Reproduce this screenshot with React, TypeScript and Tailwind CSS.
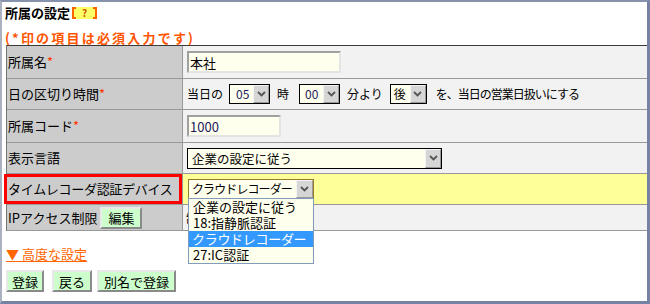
import React from "react";

function Chevron() {
  return (
    <svg width="9" height="6" viewBox="0 0 9 6" className="block">
      <path d="M1 1 L4.5 4.5 L8 1" fill="none" stroke="#555" strokeWidth="1.8" />
    </svg>
  );
}

function ArrowBox({ className }: { className: string }) {
  return (
    <div className={className}>
      <Chevron />
    </div>
  );
}

export default function App() {
  return (
    <div className="w-[650px] h-[304px] box-border bg-white border-t-2 border-l-2 border-r-[3px] border-b-[3px] border-t-[#8792ad] border-l-[#aab1c0] border-r-[#7582a3] border-b-[#7582a3] font-['Noto_Sans_CJK_JP',sans-serif] text-black overflow-hidden">
      {/* title */}
      <div className="h-[21px] flex items-center pl-[3px]">
        <span className="text-[13px] font-bold leading-none">所属の設定</span>
        <span className="ml-[2px] w-[25px] h-[12px] bg-[#ffff66] flex items-stretch justify-between">
          <span className="w-[4px] border-l-2 border-y-2 border-[#ff6600]" />
          <span className="text-[10px] font-bold leading-[12px] text-[#cc5500]">?</span>
          <span className="w-[4px] border-r-2 border-y-2 border-[#ff6600]" />
        </span>
      </div>
      {/* note */}
      <div className="h-[22px] pt-[6px] flex items-center pl-[3px]">
        <span className="text-[13px] font-bold leading-none text-[#ff5500] tracking-[2.2px]">(*印の項目は必須入力です)</span>
      </div>

      {/* table */}
      <div className="ml-[4px] border-t border-t-[#3a3a3a] border-l border-l-[#777]">
        {/* row 1 */}
        <div className="flex h-[33px] border-b border-[#999]">
          <div className="w-[176px] shrink-0 bg-[#cccccc] border-r border-[#999] flex items-center pl-[1px] text-[13px]">
            所属名<span className="text-[#ff3300]">*</span>
          </div>
          <div className="flex-1 bg-[#f2f2f2] flex items-center pl-[4px]">
            <div className="w-[154px] h-[22px] bg-[#ffffee] border-2 border-t-[#a0a0a0] border-l-[#a0a0a0] border-r-[#e4e4e4] border-b-[#e4e4e4] flex items-center pl-[1px] text-[13px] leading-none">
              本社
            </div>
          </div>
        </div>
        {/* row 2 */}
        <div className="flex h-[31px] border-b border-[#999]">
          <div className="w-[176px] shrink-0 bg-[#cccccc] border-r border-[#999] flex items-center pl-[1px] text-[13px]">
            日の区切り時間<span className="text-[#ff3300]">*</span>
          </div>
          <div className="flex-1 bg-[#f2f2f2] flex items-center pl-[4px] text-[12px]">
            <span>当日の</span>
            <div className="ml-[6px] w-[41px] h-[20px] bg-[#ffffee] border border-black flex items-stretch">
              <span className="flex-1 pl-[6px] text-[12px] leading-[18px] text-[#1a1a5e]">05</span>
              <ArrowBox className="w-[16px] bg-[#d6d6d6] border border-t-[#f4f4f4] border-l-[#f4f4f4] border-r-[#999] border-b-[#999] flex items-center justify-center" />
            </div>
            <span className="ml-[7px]">時</span>
            <div className="ml-[10px] w-[41px] h-[20px] bg-[#ffffee] border border-black flex items-stretch">
              <span className="flex-1 pl-[5px] text-[12px] leading-[18px] text-[#1a1a5e]">00</span>
              <ArrowBox className="w-[16px] bg-[#d6d6d6] border border-t-[#f4f4f4] border-l-[#f4f4f4] border-r-[#999] border-b-[#999] flex items-center justify-center" />
            </div>
            <span className="ml-[7px]">分より</span>
            <div className="ml-[7px] w-[37px] h-[20px] bg-[#ffffee] border border-black flex items-stretch">
              <span className="flex-1 pl-[3px] text-[12px] leading-[18px]">後</span>
              <ArrowBox className="w-[16px] bg-[#d6d6d6] border border-t-[#f4f4f4] border-l-[#f4f4f4] border-r-[#999] border-b-[#999] flex items-center justify-center" />
            </div>
            <span className="ml-[9px] tracking-[-1px]">を、当日の営業日扱いにする</span>
          </div>
        </div>
        {/* row 3 */}
        <div className="flex h-[33px] border-b border-[#999]">
          <div className="w-[176px] shrink-0 bg-[#cccccc] border-r border-[#999] flex items-center pl-[1px] text-[13px]">
            所属コード<span className="text-[#ff3300]">*</span>
          </div>
          <div className="flex-1 bg-[#f2f2f2] flex items-center pl-[4px]">
            <div className="w-[94px] h-[22px] bg-[#ffffee] border-2 border-t-[#a0a0a0] border-l-[#a0a0a0] border-r-[#e4e4e4] border-b-[#e4e4e4] flex items-center pl-[1px] text-[13px] leading-none text-[#1a1a5e]">
              1000
            </div>
          </div>
        </div>
        {/* row 4 */}
        <div className="flex h-[31px] border-b border-[#999]">
          <div className="w-[176px] shrink-0 bg-[#cccccc] border-r border-[#999] flex items-center pl-[1px] text-[13px]">
            表示言語
          </div>
          <div className="flex-1 bg-[#f2f2f2] flex items-center pl-[4px]">
            <div className="w-[255px] h-[21px] bg-[#ffffee] border border-black flex items-stretch">
              <span className="flex-1 pl-[4px] text-[12.5px] leading-[19px]">企業の設定に従う</span>
              <ArrowBox className="w-[16px] bg-[#d6d6d6] border border-t-[#f4f4f4] border-l-[#f4f4f4] border-r-[#999] border-b-[#999] flex items-center justify-center" />
            </div>
          </div>
        </div>
        {/* row 5 */}
        <div className="flex h-[31px] border-b border-[#999]">
          <div className="relative w-[176px] shrink-0 bg-[#cccccc] border-r border-[#999] flex items-center pl-[1px] text-[13px]">
            <span className="tracking-[-0.3px]">タイムレコーダ認証デバイス</span>
            <div className="absolute left-[-3px] top-0 w-[178px] h-[30px] border-[3px] border-[#ff0000]" />
          </div>
          <div className="relative flex-1 bg-[#ffff99] flex items-center pl-[5px]">
            <div className="w-[126px] h-[20px] bg-[#ffffee] border border-[#9a7b2c] flex items-stretch">
              <span className="flex-1 min-w-0 pl-[3px] text-[12px] leading-[18px] tracking-[-0.9px] whitespace-nowrap">クラウドレコーダー</span>
              <ArrowBox className="w-[17px] shrink-0 bg-[#d6d6d6] border border-t-[#f4f4f4] border-l-[#f4f4f4] border-r-[#999] border-b-[#999] flex items-center justify-center" />
            </div>
            {/* dropdown list */}
            <div className="absolute z-10 left-[5px] top-[24px] w-[126px] bg-[#ffffee] border border-[#7f9db9] text-[13px] leading-[16px]">
              <div className="h-[16px] pl-[4px]">企業の設定に従う</div>
              <div className="h-[16px] pl-[4px]">18:指静脈認証</div>
              <div className="h-[16px] pl-[3px] bg-[#3399ff] text-white tracking-[-0.3px]">クラウドレコーダー</div>
              <div className="h-[16px] pl-[4px]">27:IC認証</div>
            </div>
          </div>
        </div>
        {/* row 6 */}
        <div className="flex h-[26px] border-b border-[#999]">
          <div className="w-[176px] shrink-0 bg-[#cccccc] border-r border-[#999] flex items-center pl-[1px] text-[13px]">
            <span>IPアクセス制限</span>
            <button className="ml-[3px] w-[42px] h-[22px] bg-[#ccffcc] border-2 border-t-[#e8e8e8] border-l-[#e8e8e8] border-r-[#8a8a8a] border-b-[#8a8a8a] text-[13px] leading-none flex items-center justify-center">
              編集
            </button>
          </div>
          <div className="flex-1 bg-[#f2f2f2] flex items-center pl-[3px] text-[13px]">
            制
          </div>
        </div>
      </div>

      {/* advanced link */}
      <div className="mt-[14px] h-[16px] pl-[4px] flex items-center">
        <span className="text-[13px] leading-none text-[#ff6600] underline underline-offset-2">▼ 高度な設定</span>
      </div>

      {/* buttons */}
      <div className="mt-[9px] pl-[4px] flex items-center">
        <button className="w-[38px] h-[22px] bg-[#ccffcc] border-2 border-t-[#e8e8e8] border-l-[#e8e8e8] border-r-[#8a8a8a] border-b-[#8a8a8a] text-[13px] leading-none flex items-center justify-center">
          登録
        </button>
        <button className="ml-[8px] w-[40px] h-[22px] bg-[#ccffcc] border-2 border-t-[#e8e8e8] border-l-[#e8e8e8] border-r-[#8a8a8a] border-b-[#8a8a8a] text-[13px] leading-none flex items-center justify-center">
          戻る
        </button>
        <button className="ml-[5px] w-[79px] h-[22px] bg-[#ccffcc] border-2 border-t-[#e8e8e8] border-l-[#e8e8e8] border-r-[#8a8a8a] border-b-[#8a8a8a] text-[13px] leading-none flex items-center justify-center">
          別名で登録
        </button>
      </div>
    </div>
  );
}
